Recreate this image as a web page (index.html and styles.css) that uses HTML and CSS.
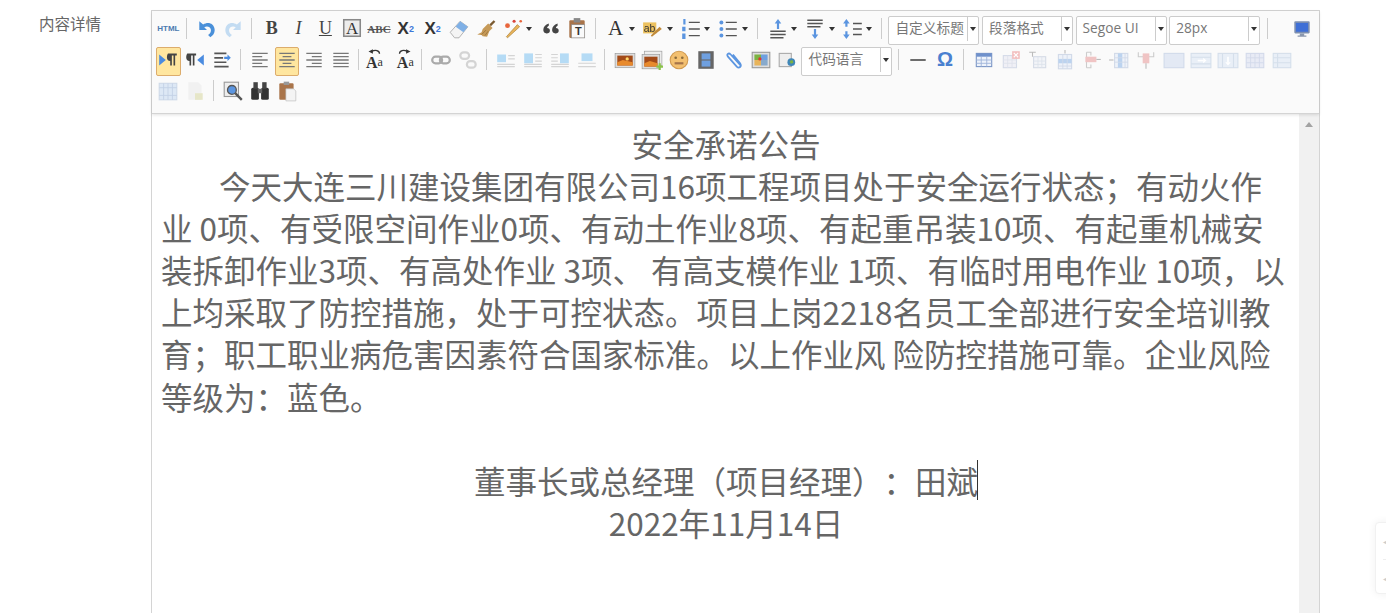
FILE: index.html
```html
<!DOCTYPE html>
<html lang="zh-CN">
<head>
    <meta charset="UTF-8">
    <title>内容详情</title>
    <link rel="stylesheet" href="styles.css">
</head>
<body>
    <svg class="sprites" xmlns="http://www.w3.org/2000/svg">
        <symbol id="i-undo" viewBox="0 0 20 20"><path d="M3 3v8h7L7.500 8.500C10 7 13 8 13.500 10.500c.3 2-.5 3.500-2.500 5l2 2c3-2 4.500-4.500 3.800-8C16 5 11 3 6.500 6z" fill="#4a90d9"/></symbol>
        <symbol id="i-redo" viewBox="0 0 20 20"><path d="M17 3v8h-7l2.500-2.500C10 7 7 8 6.500 10.500c-.3 2 .5 3.500 2.500 5l-2 2c-3-2-4.500-4.500-3.800-8C4 5 9 3 13.500 6z" fill="#c3dcf2"/></symbol>
        <symbol id="i-box" viewBox="0 0 20 20"><rect x="2.500" y="2.500" width="15" height="15" fill="#ececec" stroke="#888" stroke-width="1.400"/></symbol>
        <symbol id="i-eraser" viewBox="0 0 20 20"><path d="M2 13 11 3l7 5-8 10H6z" fill="#f4f4f4" stroke="#aaa" stroke-width=".8"/><path d="M11 3l7 5-4 5-7-5z" fill="#7fb0e6"/></symbol>
        <symbol id="i-brush" viewBox="0 0 20 20"><path d="M13 6l4-4 1.500 1.500-4 4z" fill="#7a5a30"/><path d="M12 5l4 4-3 3-2 5-4-.5-1-1-4-.5 4-2 1-3z" fill="#c69a58"/><path d="M6 15l4-4M9 16l3-4" stroke="#94703a" stroke-width=".7"/></symbol>
        <symbol id="i-wand" viewBox="0 0 20 20"><path d="M5 18l-1-1L14 6l2 2z" fill="#e8b45a" stroke="#a87a30" stroke-width=".6"/><circle cx="5" cy="7" r="2.200" fill="#e8663c"/><circle cx="11" cy="3" r="1.400" fill="#d9443a"/><circle cx="17" cy="3" r="1.200" fill="#e8663c"/></symbol>
        <symbol id="i-quote" viewBox="0 0 20 20"><path d="M3 11c0-3 2-5 5-6v2c-1 .5-1.500 1-1.500 2C8 9 9 10 9 11.500S7.800 14 6 14s-3-1.200-3-3zm8 0c0-3 2-5 5-6v2c-1 .5-1.500 1-1.500 2 1.500 0 2.500 1 2.500 2.500S15.800 14 14 14s-3-1.200-3-3z" fill="#444"/></symbol>
        <symbol id="i-paste" viewBox="0 0 20 20"><rect x="3" y="3" width="14" height="16" rx="1" fill="#a9744a"/><rect x="7" y="1" width="6" height="4" fill="#888"/><rect x="5" y="7" width="12" height="12" fill="#fafafa" stroke="#888" stroke-width=".6"/></symbol>
        <symbol id="i-mark" viewBox="0 0 20 20"><rect x="1" y="4" width="12" height="10" fill="#ecc15f"/><text x="1.500" y="12.500" font-family="Liberation Sans" font-size="9.500" fill="#333">ab</text><path d="M9 17l-1-1 8-8 2 2z" fill="#c08a3a"/></symbol>
        <symbol id="i-ol" viewBox="0 0 20 20"><path d="M3 1h2v5H3zM2 8h3v4H2zM2 14h3v5H2z" fill="#5b95e0"/><path d="M8 4h10M8 10h10M8 16h10" stroke="#555" stroke-width="1.300"/></symbol>
        <symbol id="i-ul" viewBox="0 0 20 20"><circle cx="4" cy="4" r="1.800" fill="#5b95e0"/><circle cx="4" cy="10" r="1.800" fill="#5b95e0"/><circle cx="4" cy="16" r="1.800" fill="#5b95e0"/><path d="M8 4h10M8 10h10M8 16h10" stroke="#555" stroke-width="1.300"/></symbol>
        <symbol id="i-rowtop" viewBox="0 0 20 20"><path d="M10 1l3 4h-2v5H9V5H7z" fill="#5b95e0"/><path d="M3 12h14M3 15h14M3 18h12" stroke="#555" stroke-width="1.400"/></symbol>
        <symbol id="i-rowbottom" viewBox="0 0 20 20"><path d="M3 2h14M3 5h14M3 8h12" stroke="#555" stroke-width="1.400"/><path d="M10 19l3-4h-2v-5H9v5H7z" fill="#5b95e0"/></symbol>
        <symbol id="i-lineheight" viewBox="0 0 20 20"><path d="M4 1l3 4H5v3H3V5H1zM4 19l3-4H5v-3H3v3H1z" fill="#5b95e0"/><path d="M10 5h8M10 10h8M10 15h8" stroke="#555" stroke-width="1.300"/></symbol>
        <symbol id="i-ltr" viewBox="0 0 20 20"><path d="M2 5l6 5-6 5z" fill="#4a8be0"/><path d="M10 4h8v2h-1.500v9H15V6h-1.500v9H12v-4c-2 0-3-1.500-3-3.500S10 4 10 4z" fill="#444"/></symbol>
        <symbol id="i-rtl" viewBox="0 0 20 20"><path d="M18 5l-6 5 6 5z" fill="#4a8be0"/><path d="M3 4h8v2H9.500v9H8V6H6.500v9H5v-4C3 11 2 9.500 2 7.500S3 4 3 4z" fill="#444"/></symbol>
        <symbol id="i-indent" viewBox="0 0 20 20"><path d="M3 4h11M3 8h8M3 12h11M3 16h13" stroke="#555" stroke-width="1.500"/><path d="M12 7h3V5l3 3-3 3V9h-3z" fill="#4a8be0"/></symbol>
        <symbol id="i-left" viewBox="0 0 20 20"><path d="M3 4h14M3 7h9M3 10h14M3 13h9M3 16h14" stroke="#777" stroke-width="1.200"/></symbol>
        <symbol id="i-center" viewBox="0 0 20 20"><path d="M3 4h14M6 7h8M3 10h14M6 13h8M3 16h14" stroke="#777" stroke-width="1.200"/></symbol>
        <symbol id="i-right" viewBox="0 0 20 20"><path d="M3 4h14M8 7h9M3 10h14M8 13h9M3 16h14" stroke="#777" stroke-width="1.200"/></symbol>
        <symbol id="i-justify" viewBox="0 0 20 20"><path d="M3 4h14M3 7h14M3 10h14M3 13h14M3 16h14" stroke="#777" stroke-width="1.200"/></symbol>
        <symbol id="i-arc-left" viewBox="0 0 20 20"><path d="M15 7c0-3-4-4-7-2" fill="none" stroke="#333" stroke-width="1.200"/><path d="M5 5l4-2v4z" fill="#333"/></symbol>
        <symbol id="i-arc-right" viewBox="0 0 20 20"><path d="M5 7c0-3 4-4 7-2" fill="none" stroke="#333" stroke-width="1.200"/><path d="M15 5l-4-2v4z" fill="#333"/></symbol>
        <symbol id="i-link" viewBox="0 0 20 20"><rect x="2" y="7" width="9" height="6" rx="3" fill="none" stroke="#aaa" stroke-width="2"/><rect x="9" y="7" width="9" height="6" rx="3" fill="none" stroke="#aaa" stroke-width="2"/></symbol>
        <symbol id="i-unlink" viewBox="0 0 20 20"><rect x="3" y="3" width="8" height="6" rx="3" fill="none" stroke="#d4d4d4" stroke-width="2"/><rect x="9" y="11" width="8" height="6" rx="3" fill="none" stroke="#d4d4d4" stroke-width="2"/></symbol>
        <symbol id="i-imgleft" viewBox="0 0 20 20"><rect x="2" y="5" width="8" height="7" fill="#b5dbf5"/><path d="M12 6h6M12 9h6M2 14h16M2 16h16" stroke="#d4d4d4"/></symbol>
        <symbol id="i-imgright" viewBox="0 0 20 20"><rect x="2" y="4" width="8" height="9" fill="#b5dbf5"/><path d="M12 5h6M12 8h6M12 11h6M2 14h16M2 16h16" stroke="#d4d4d4"/></symbol>
        <symbol id="i-imgnone" viewBox="0 0 20 20"><rect x="10" y="4" width="8" height="9" fill="#b5dbf5"/><path d="M2 5h6M2 8h6M2 11h6M2 14h16M2 16h16" stroke="#d4d4d4"/></symbol>
        <symbol id="i-imgcenter" viewBox="0 0 20 20"><rect x="5" y="4" width="10" height="7" fill="#b5dbf5"/><path d="M2 13h16M2 16h16" stroke="#d4d4d4"/></symbol>
        <symbol id="i-image" viewBox="0 0 20 20"><rect x="1" y="4" width="18" height="13" fill="#ddd" stroke="#999" stroke-width=".6"/><rect x="3" y="6" width="14" height="9" fill="#a34a18"/><path d="M3 12l5-2 9 2v3H3z" fill="#e88a2c"/><circle cx="12" cy="9" r="1.500" fill="#ffd86a"/></symbol>
        <symbol id="i-imgadd" viewBox="0 0 20 20"><rect x="3" y="2" width="16" height="13" fill="#eee" stroke="#999" stroke-width=".6"/><rect x="1" y="5" width="16" height="13" fill="#ddd" stroke="#999" stroke-width=".6"/><rect x="3" y="7" width="12" height="9" fill="#a34a18"/><path d="M3 13l5-2 7 2v3H3z" fill="#e88a2c"/><path d="M14 15h2v-2h2v2h2v2h-2v2h-2v-2h-2z" fill="#8bc34a"/></symbol>
        <symbol id="i-emotion" viewBox="0 0 20 20"><circle cx="10" cy="10" r="8" fill="#f3c070" stroke="#d19a50"/><circle cx="7" cy="8" r="1.200" fill="#8a6a3a"/><circle cx="13" cy="8" r="1.200" fill="#8a6a3a"/><path d="M6 12h8v2H6z" fill="#a5744a"/></symbol>
        <symbol id="i-film" viewBox="0 0 20 20"><rect x="3" y="2" width="14" height="16" fill="#666"/><rect x="6" y="4" width="8" height="5.500" fill="#6fa0e0"/><rect x="6" y="10.500" width="8" height="5.500" fill="#6fa0e0"/></symbol>
        <symbol id="i-attach" viewBox="0 0 20 20"><path d="M16 15 7 5c-2-2-4 0-2.500 2l8 9c2 2 5 0 3-3L9 5" fill="none" stroke="#5b95e0" stroke-width="1.600"/></symbol>
        <symbol id="i-map" viewBox="0 0 20 20"><rect x="2" y="3" width="16" height="14" fill="#ddd" stroke="#999"/><rect x="4" y="5" width="6" height="5" fill="#7cb342"/><rect x="10" y="5" width="6" height="5" fill="#6fa0e0"/><rect x="4" y="10" width="6" height="5" fill="#e8b45a"/><rect x="10" y="10" width="6" height="5" fill="#8ac"/><circle cx="9" cy="9" r="1.500" fill="#d33"/></symbol>
        <symbol id="i-frame" viewBox="0 0 20 20"><rect x="2" y="4" width="11" height="12" fill="#eee" stroke="#aaa"/><circle cx="13" cy="12" r="3.500" fill="#3f86b8"/><path d="M11.500 11l2.500-1 1 2.500-2.500 1z" fill="#7cb342"/></symbol>
        <symbol id="i-hr" viewBox="0 0 20 20"><path d="M3 10h14" stroke="#333" stroke-width="1.300"/></symbol>
        <symbol id="i-table" viewBox="0 0 20 20"><rect x="3" y="4" width="14" height="12" fill="#eef3fb" stroke="#7c97c6"/><rect x="3" y="4" width="14" height="3" fill="#6f91cc"/><path d="M3 10h14M3 13h14M7.500 7v9M12.500 7v9" stroke="#9db3d8" stroke-width=".8"/></symbol>
        <symbol id="i-tabledel" viewBox="0 0 20 20"><rect x="3" y="6" width="12" height="11" fill="#f0f0f6" stroke="#d5dbe8"/><path d="M3 10h12M3 13h12M7 6v11M11 6v11" stroke="#dfe3ec" stroke-width=".8"/><rect x="11" y="2" width="7" height="7" fill="#f3c0c0"/><path d="M12.500 3.500l4 4m0-4l-4 4" stroke="#fff"/></symbol>
        <symbol id="i-caption" viewBox="0 0 20 20"><path d="M2 3h6M5 3v4" stroke="#bbb"/><rect x="6" y="7" width="11" height="10" fill="#f2f4f8" stroke="#d5dbe6"/><path d="M6 11h11M6 14h11M10 7v10M13.500 7v10" stroke="#dde2ea" stroke-width=".8"/></symbol>
        <symbol id="i-rowadd" viewBox="0 0 20 20"><path d="M10 1v3" stroke="#bbb"/><rect x="4" y="5" width="12" height="13" fill="#eef2f9" stroke="#d2dae8"/><rect x="4" y="9" width="12" height="4" fill="#bcd3ef"/><path d="M8 5v13M12 5v13M4 15.500h12" stroke="#d2dae8" stroke-width=".8"/></symbol>
        <symbol id="i-rowdel" viewBox="0 0 20 20"><path d="M5 3h4v3M5 17h4v-3M5 3v14" fill="none" stroke="#ccc"/><rect x="4" y="7" width="10" height="5" fill="#f0c4c4"/><path d="M14 9.500h4" stroke="#bbb"/></symbol>
        <symbol id="i-coladd" viewBox="0 0 20 20"><path d="M1 10h4" stroke="#bbb"/><rect x="6" y="4" width="12" height="13" fill="#eef2f9" stroke="#d2dae8"/><rect x="9" y="4" width="4" height="13" fill="#bcd3ef"/><path d="M6 8h12M6 12h12M15.500 4v13" stroke="#d2dae8" stroke-width=".8"/></symbol>
        <symbol id="i-coldel" viewBox="0 0 20 20"><path d="M3 3v4h14V3" fill="none" stroke="#ccc"/><rect x="7" y="4" width="6" height="9" fill="#f0c4c4"/><path d="M10 13v5" stroke="#bbb"/></symbol>
        <symbol id="i-merge" viewBox="0 0 20 20"><rect x="1" y="4" width="18" height="13" fill="#e3e9f4" stroke="#d2dbea"/></symbol>
        <symbol id="i-mergeright" viewBox="0 0 20 20"><rect x="1" y="4" width="18" height="13" fill="#e9eff7" stroke="#d5dfeb"/><path d="M1 7.500h18M1 13.500h18" stroke="#d5dfeb"/><path d="M7 10.500h5" stroke="#fff" stroke-width="1.500"/><path d="M12 8l3 2.500-3 2.500z" fill="#fff"/></symbol>
        <symbol id="i-mergedown" viewBox="0 0 20 20"><rect x="1" y="4" width="18" height="13" fill="#e9eff7" stroke="#d5dfeb"/><path d="M5 4v13M15 4v13" stroke="#d5dfeb"/><path d="M10 7v5" stroke="#fff" stroke-width="1.500"/><path d="M7.500 12l2.500 3 2.500-3z" fill="#fff"/></symbol>
        <symbol id="i-splitall" viewBox="0 0 20 20"><rect x="2" y="4" width="16" height="13" fill="#e8ebf5" stroke="#d3daea"/><path d="M2 8h16M2 12.500h16M6 4v13M10 4v13M14 4v13" stroke="#d3daea" stroke-width=".8"/></symbol>
        <symbol id="i-splitrows" viewBox="0 0 20 20"><rect x="2" y="4" width="16" height="13" fill="#e9eff7" stroke="#d5dfeb"/><path d="M2 8h16M2 12.500h16M6 4v13" stroke="#d5dfeb"/></symbol>
        <symbol id="i-splitcols" viewBox="0 0 20 20"><rect x="2" y="3" width="16" height="15" fill="#dde8f5" stroke="#cfdae8"/><path d="M6 3v15M10 3v15M14 3v15M2 7h16M2 14h16" stroke="#c4d2e6" stroke-width=".8"/></symbol>
        <symbol id="i-print" viewBox="0 0 20 20"><path d="M4 2h9l3 3v13H4z" fill="#f1f1f1"/><rect x="10" y="12" width="7" height="6" fill="#e6e6c8"/></symbol>
        <symbol id="i-preview" viewBox="0 0 20 20"><rect x="2" y="2" width="13" height="13" fill="#eee" stroke="#999"/><circle cx="9" cy="9" r="4" fill="#5b95e0" stroke="#555" stroke-width="1.200"/><path d="M12 12l6 6" stroke="#555" stroke-width="2.200"/></symbol>
        <symbol id="i-search" viewBox="0 0 20 20"><rect x="2" y="7" width="7" height="11" rx="1.500" fill="#333"/><rect x="11" y="7" width="7" height="11" rx="1.500" fill="#333"/><rect x="4" y="2" width="4" height="6" fill="#444"/><rect x="12" y="2" width="4" height="6" fill="#444"/><rect x="8" y="8" width="4" height="4" fill="#666"/></symbol>
        <symbol id="i-drafts" viewBox="0 0 20 20"><rect x="3" y="3" width="13" height="15" rx="1" fill="#a9744a"/><rect x="7" y="1.500" width="5" height="3" fill="#999"/><path d="M9 8h7l2 2v9H9z" fill="#f4f4f4" stroke="#bbb" stroke-width=".6"/></symbol>
        <symbol id="i-full" viewBox="0 0 20 20"><rect x="3" y="3" width="14" height="11" rx="1" fill="#7d8fb0"/><rect x="4.500" y="4.500" width="11" height="8" fill="#3f6fd6"/><path d="M8 14h4v2h2v1H6v-1h2z" fill="#8a97ad"/></symbol>
    </svg>

    <div class="form-row">
        <label class="form-label">内容详情</label>
        <div class="editor">
            <div class="toolbar">
                <div class="tool-row">
                    <span class="btn html-btn">HTML</span>
                    <i class="sep"></i>
                    <span class="btn"><svg><use href="#i-undo"/></svg></span>
                    <span class="btn"><svg><use href="#i-redo"/></svg></span>
                    <i class="sep"></i>
                    <span class="btn glyph serif-b">B</span>
                    <span class="btn glyph serif-i">I</span>
                    <span class="btn glyph serif-u">U</span>
                    <span class="btn glyph boxed"><svg><use href="#i-box"/></svg><b>A</b></span>
                    <span class="btn glyph strike">ABC</span>
                    <span class="btn glyph script">X<sup>2</sup></span>
                    <span class="btn glyph script">X<sub>2</sub></span>
                    <span class="btn"><svg><use href="#i-eraser"/></svg></span>
                    <span class="btn"><svg><use href="#i-brush"/></svg></span>
                    <span class="btn split"><svg><use href="#i-wand"/></svg><em></em></span>
                    <span class="btn"><svg><use href="#i-quote"/></svg></span>
                    <span class="btn glyph boxed"><svg><use href="#i-paste"/></svg><b class="small">T</b></span>
                    <i class="sep"></i>
                    <span class="btn split glyph font-a"><b>A</b><em></em></span>
                    <span class="btn split"><svg><use href="#i-mark"/></svg><em></em></span>
                    <span class="btn split"><svg><use href="#i-ol"/></svg><em></em></span>
                    <span class="btn split"><svg><use href="#i-ul"/></svg><em></em></span>
                    <i class="sep"></i>
                    <span class="btn split"><svg><use href="#i-rowtop"/></svg><em></em></span>
                    <span class="btn split"><svg><use href="#i-rowbottom"/></svg><em></em></span>
                    <span class="btn split"><svg><use href="#i-lineheight"/></svg><em></em></span>
                    <i class="sep"></i>
                    <div class="combo"><span>自定义标题</span><em></em></div>
                    <div class="combo"><span>段落格式</span><em></em></div>
                    <div class="combo"><span>Segoe UI</span><em></em></div>
                    <div class="combo"><span>28px</span><em></em></div>
                    <i class="sep"></i>
                    <span class="btn end"><svg><use href="#i-full"/></svg></span>
                </div>
                <div class="tool-row">
                    <span class="btn on"><svg><use href="#i-ltr"/></svg></span>
                    <span class="btn"><svg><use href="#i-rtl"/></svg></span>
                    <span class="btn"><svg><use href="#i-indent"/></svg></span>
                    <i class="sep"></i>
                    <span class="btn"><svg><use href="#i-left"/></svg></span>
                    <span class="btn on"><svg><use href="#i-center"/></svg></span>
                    <span class="btn"><svg><use href="#i-right"/></svg></span>
                    <span class="btn"><svg><use href="#i-justify"/></svg></span>
                    <i class="sep before-case"></i>
                    <span class="btn glyph case case-first"><svg><use href="#i-arc-left"/></svg>A<small>a</small></span>
                    <span class="btn glyph case"><svg><use href="#i-arc-right"/></svg>A<small>a</small></span>
                    <i class="sep after-case"></i>
                    <span class="btn"><svg><use href="#i-link"/></svg></span>
                    <span class="btn"><svg><use href="#i-unlink"/></svg></span>
                    <i class="sep"></i>
                    <span class="btn"><svg><use href="#i-imgleft"/></svg></span>
                    <span class="btn"><svg><use href="#i-imgright"/></svg></span>
                    <span class="btn"><svg><use href="#i-imgnone"/></svg></span>
                    <span class="btn"><svg><use href="#i-imgcenter"/></svg></span>
                    <i class="sep"></i>
                    <div class="wide-group">
                        <span class="btn"><svg><use href="#i-image"/></svg></span>
                        <span class="btn"><svg><use href="#i-imgadd"/></svg></span>
                        <span class="btn"><svg><use href="#i-emotion"/></svg></span>
                        <span class="btn"><svg><use href="#i-film"/></svg></span>
                        <span class="btn"><svg><use href="#i-attach"/></svg></span>
                        <span class="btn"><svg><use href="#i-map"/></svg></span>
                        <span class="btn"><svg><use href="#i-frame"/></svg></span>
                    </div>
                    <div class="combo lang"><span>代码语言</span><em></em></div>
                    <i class="sep"></i>
                    <span class="btn"><svg><use href="#i-hr"/></svg></span>
                    <span class="btn glyph omega">Ω</span>
                    <i class="sep"></i>
                    <div class="wide-group">
                        <span class="btn"><svg><use href="#i-table"/></svg></span>
                        <span class="btn"><svg><use href="#i-tabledel"/></svg></span>
                        <span class="btn"><svg><use href="#i-caption"/></svg></span>
                        <span class="btn"><svg><use href="#i-rowadd"/></svg></span>
                        <span class="btn"><svg><use href="#i-rowdel"/></svg></span>
                        <span class="btn"><svg><use href="#i-coladd"/></svg></span>
                        <span class="btn"><svg><use href="#i-coldel"/></svg></span>
                        <span class="btn"><svg><use href="#i-merge"/></svg></span>
                        <span class="btn"><svg><use href="#i-mergeright"/></svg></span>
                        <span class="btn"><svg><use href="#i-mergedown"/></svg></span>
                        <span class="btn"><svg><use href="#i-splitall"/></svg></span>
                        <span class="btn"><svg><use href="#i-splitrows"/></svg></span>
                    </div>
                </div>
                <div class="tool-row">
                    <span class="btn"><svg><use href="#i-splitcols"/></svg></span>
                    <span class="btn"><svg><use href="#i-print"/></svg></span>
                    <i class="sep"></i>
                    <span class="btn"><svg><use href="#i-preview"/></svg></span>
                    <span class="btn"><svg><use href="#i-search"/></svg></span>
                    <span class="btn"><svg><use href="#i-drafts"/></svg></span>
                </div>
            </div>
            <div class="edit-area">
                <div class="doc">
                    <p class="center">安全承诺公告</p>
                    <p class="indent">今天大连三川建设集团有限公司16项工程项目处于安全运行状态；有动火作业 0项、有受限空间作业0项、有动土作业8项、有起重吊装10项、有起重机械安装拆卸作业3项、有高处作业 3项、 有高支模作业 1项、有临时用电作业 10项，以上均采取了防控措施，处于可控状态。项目上岗2218名员工全部进行安全培训教育；职工职业病危害因素符合国家标准。以上作业风 险防控措施可靠。企业风险等级为：蓝色。</p>
                    <p>&nbsp;</p>
                    <p class="center">董事长或总经理（项目经理）：田斌<span class="caret"></span></p>
                    <p class="center">2022年11月14日</p>
                </div>
                <div class="scrollbar"><span class="arrow-up"></span></div>
            </div>
        </div>
    </div>

    <div class="side-card"><span>◂</span><span>◂</span></div>
</body>
</html>
```

FILE: styles.css
```css
* {
    margin: 0;
    padding: 0;
    box-sizing: border-box;
}

html, body {
    height: 613px;
    overflow: hidden;
}

body {
    font-family: "Noto Sans CJK SC", "Open Sans", sans-serif;
    background: #fff;
    color: #666;
}

.sprites {
    display: none;
}

.form-row {
    display: flex;
    height: 603px;
    padding: 10px 0 0 39px;
    box-sizing: content-box;
}

.form-label {
    width: 112px;
    flex: none;
    font-size: 15.5px;
    line-height: 26px;
    color: #666;
}

.editor {
    width: 1169px;
    height: 603px;
    flex: none;
    border: 1px solid #d4d4d4;
    border-bottom: none;
    display: flex;
    flex-direction: column;
}

.toolbar {
    height: 103px;
    flex: none;
    padding: 4px 0 0 3px;
    background: #fafafa;
    border-bottom: 1px solid #d4d4d4;
    box-shadow: 0 1px 3px rgba(0, 0, 0, 0.12);
    position: relative;
}

.tool-row {
    display: flex;
    align-items: center;
    height: 31px;
}

.wide-group {
    display: flex;
    flex: none;
}

.btn {
    width: 26.8px;
    height: 29px;
    flex: none;
    display: flex;
    align-items: center;
    justify-content: center;
    padding-bottom: 4px;
    position: relative;
    font-family: "Liberation Serif", serif;
    color: #444;
}

.wide-group .btn {
    width: 27.15px;
}

.btn svg {
    width: 22px;
    height: 22px;
    flex: none;
    filter: blur(0.3px);
}

.btn.on {
    width: 24.8px;
    margin: 0 1px;
    background: #ffe69f;
    border: 1px solid #dcac6c;
    border-radius: 2px;
}

.btn.end {
    margin-left: 14px;
}

.btn.split {
    width: 37.6px;
    justify-content: flex-start;
}

.btn.split svg {
    margin: 0 2.4px;
}

.btn.split em,
.combo em {
    display: block;
    flex: none;
    width: 0;
    height: 0;
    border-left: 3.5px solid transparent;
    border-right: 3.5px solid transparent;
    border-top: 4px solid #333;
}

.html-btn {
    font-family: "Liberation Sans", sans-serif;
    font-size: 8px;
    font-weight: 700;
    color: #4a7bb0;
}

.glyph {
    font-size: 18px;
}

.serif-b {
    font-weight: 700;
}

.serif-i {
    font-style: italic;
}

.serif-u {
    text-decoration: underline;
}

.boxed svg {
    position: absolute;
    left: 2.4px;
    top: 0.5px;
}

.boxed b {
    position: relative;
    font-weight: 400;
    font-size: 17px;
    color: #333;
}

.boxed b.small {
    font-family: "Liberation Sans", sans-serif;
    font-weight: 700;
    font-size: 11px;
    margin: 5px 0 0 2px;
}

.strike {
    font-size: 11px;
    font-weight: 700;
    color: #555;
    text-decoration: line-through;
}

.script {
    font-family: "Liberation Sans", sans-serif;
    font-weight: 700;
    font-size: 17px;
    color: #333;
}

.script sup,
.script sub {
    font-size: 9px;
    color: #3c76d8;
}

.font-a b {
    width: 26.8px;
    flex: none;
    text-align: center;
    font-weight: 400;
    font-size: 21px;
    color: #333;
}

.case {
    font-size: 16px;
    font-weight: 700;
    color: #333;
    padding-top: 6px;
}

.case svg {
    position: absolute;
    left: 2.4px;
    top: -1px;
    filter: none;
}

.case small {
    font-size: 12px;
    font-weight: 400;
}

.case-first {
    margin-right: 4px;
}

.omega {
    font-family: "Liberation Sans", sans-serif;
    font-size: 20px;
    font-weight: 700;
    color: #4a80d0;
}

.sep {
    width: 1px;
    height: 21px;
    flex: none;
    background: #ccc;
    margin: 0 6px 4px 4.5px;
}

.sep.before-case {
    margin: 0 2.5px 4px 3.5px;
}

.sep.after-case {
    margin: 0 5.5px 4px 2.5px;
}

.combo {
    width: 91px;
    height: 29px;
    flex: none;
    margin-right: 2.6px;
    display: flex;
    align-items: flex-start;
    background: #fff;
    border: 1px solid #ccc;
    border-radius: 2px;
    font-family: "Open Sans", "Noto Sans CJK SC", sans-serif;
    font-size: 13.7px;
    color: #777;
}

.combo span {
    flex: 1;
    height: 24px;
    line-height: 22px;
    padding-left: 6px;
    border-right: 1px solid #ccc;
    white-space: nowrap;
}

.combo em {
    margin: 10px 2px 0;
}

.combo.lang {
    margin: 0 1px 0 0;
}

.edit-area {
    flex: 1;
    display: flex;
    min-height: 0;
}

.doc {
    flex: 1;
    padding: 8px 8px 0 9px;
    font-size: 31.5px;
    line-height: 42.1px;
    color: #666;
    text-spacing-trim: space-all;
}

.center {
    text-align: center;
}

.indent {
    text-indent: 58px;
}

.caret {
    display: inline-block;
    width: 1px;
    height: 40px;
    margin-left: -1px;
    background: #333;
    vertical-align: -6px;
}

.scrollbar {
    width: 20px;
    flex: none;
    background: #f1f1f1;
    display: flex;
    justify-content: center;
    padding-top: 8px;
}

.arrow-up {
    width: 0;
    height: 0;
    border-left: 4.5px solid transparent;
    border-right: 4.5px solid transparent;
    border-bottom: 5px solid #a3a3a3;
}

.side-card {
    position: absolute;
    left: 1375px;
    top: 522px;
    width: 60px;
    height: 72px;
    background: #fff;
    border: 1px solid #f1f1f1;
    border-radius: 4px;
    box-shadow: 0 0 8px rgba(0, 0, 0, 0.06);
    display: grid;
    grid-template-rows: 1fr 1fr;
    font-size: 10px;
    color: #ccc;
    line-height: 36px;
    padding-left: 7px;
}

.side-card span:first-child {
    border-bottom: 1px dashed #eee;
}
```
